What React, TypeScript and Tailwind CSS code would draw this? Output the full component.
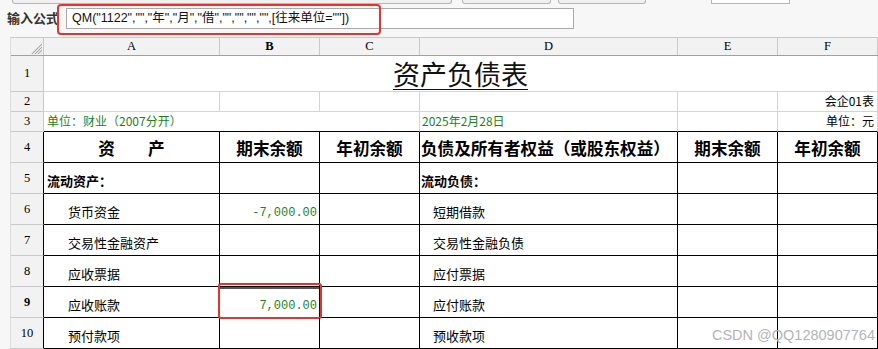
import React from 'react';

const cjk = "font-['Noto_Sans_CJK_SC',sans-serif]";
const serif = "font-['Liberation_Serif','Noto_Sans_CJK_SC',serif]";
const mono = "font-['Liberation_Mono',monospace]";
const green = 'text-[#1f7f1f]';

const rows = [
  { n: 5, left: '流动资产：', right: '流动负债：', bold: true },
  { n: 6, left: '货币资金', right: '短期借款', b: '-7,000.00' },
  { n: 7, left: '交易性金融资产', right: '交易性金融负债' },
  { n: 8, left: '应收票据', right: '应付票据' },
  { n: 9, left: '应收账款', right: '应付账款', b: '7,000.00', selected: true },
  { n: 10, left: '预付款项', right: '预收款项' },
];

function RowHead({ n, dark, bold }: { n: number; dark?: boolean; bold?: boolean }) {
  return (
    <div
      className={`w-[33px] shrink-0 flex items-center justify-center bg-[#f2f2f2] border-b border-[#c9c9c9] border-r text-[12.5px] text-black ${serif} ${
        dark ? 'border-r-black' : 'border-r-[#c9c9c9]'
      } ${bold ? 'font-bold' : 'font-normal'}`}
    >
      {n}
    </div>
  );
}

function Corner() {
  return (
    <div className="w-[33px] shrink-0 relative bg-[#f2f2f2] border-r border-[#c9c9c9]">
      <svg className="absolute right-[1px] bottom-[1px]" width="12" height="12" viewBox="0 0 12 12">
        <polygon points="12,0 12,12 0,12" fill="#e4e4e4" />
        <line x1="12" y1="2" x2="2" y2="12" stroke="#a8a8a8" strokeWidth="1" />
        <line x1="12" y1="5" x2="5" y2="12" stroke="#a8a8a8" strokeWidth="1" />
        <line x1="12" y1="8" x2="8" y2="12" stroke="#a8a8a8" strokeWidth="1" />
      </svg>
    </div>
  );
}

export default function App() {
  return (
    <div className={`w-[878px] h-[349px] overflow-hidden bg-[#f7f7f7] relative ${cjk}`}>
      {/* toolbar remnants */}
      <div className="flex h-[4px]">
        <div className="ml-[12px] w-[440px] border-x border-b border-[#b5b5b5] rounded-b-[3px] bg-[#f0f0f0]" />
        <div className="ml-[10px] w-[89px] border-x border-b border-[#b5b5b5] rounded-b-[3px] bg-[#f0f0f0]" />
        <div className="ml-[7px] w-[88px] border-x border-b border-[#b5b5b5] rounded-b-[3px] bg-[#f0f0f0]" />
        <div className="ml-[65px] w-[79px] border-x border-b border-[#b5b5b5] bg-white" />
      </div>

      {/* formula bar */}
      <div className="flex items-center h-[33px] pb-[5px]">
        <span className="ml-[7px] w-[59px] text-[13px] font-bold text-[#333]">输入公式</span>
        <div className="w-[508px] h-[21px] bg-white border border-[#a9a9a9] flex items-center pl-[5px] text-[12.5px] text-[#111] font-['Liberation_Sans','Noto_Sans_CJK_SC',sans-serif]">
          QM("1122","","年","月","借","","","","",[往来单位=""])
        </div>
      </div>
      <div className="absolute left-[57px] top-[4px] w-[324px] h-[31px] border-2 border-[#e8322c] rounded-[4px]" />

      <div className="flex">
        <div className="w-[11px] shrink-0 bg-[#f7f7f7] border-r border-[#dcdcdc]" />
        <div className="flex flex-col bg-white">
          {/* column headers */}
          <div className={`flex h-[19px] border-t border-[#c9c9c9] border-b border-b-[#a0a0a0] bg-[#f2f2f2] text-[12.5px] ${serif}`}>
            <Corner />
            <div className="w-[176px] flex items-center justify-center border-r border-[#c9c9c9]">A</div>
            <div className="w-[100px] flex items-center justify-center border-r border-[#c9c9c9] font-bold">B</div>
            <div className="w-[100px] flex items-center justify-center border-r border-[#c9c9c9]">C</div>
            <div className="w-[258px] flex items-center justify-center border-r border-[#c9c9c9]">D</div>
            <div className="w-[100px] flex items-center justify-center border-r border-[#c9c9c9]">E</div>
            <div className="w-[100px] flex items-center justify-center border-r border-[#c9c9c9]">F</div>
          </div>

          {/* row 1 title */}
          <div className="flex h-[36px]">
            <RowHead n={1} />
            <div className="w-[834px] flex items-center justify-center border-r border-b border-[#d4d4d4]">
              <span className="text-[27px] leading-none underline underline-offset-[4px] decoration-1 text-[#111] font-['Noto_Sans_CJK_SC',serif]">
                资产负债表
              </span>
            </div>
          </div>

          {/* row 2 */}
          <div className="flex h-[20px] text-[12px]">
            <RowHead n={2} />
            <div className="w-[176px] border-r border-b border-[#d4d4d4]" />
            <div className="w-[100px] border-r border-b border-[#d4d4d4]" />
            <div className="w-[100px] border-r border-b border-[#d4d4d4]" />
            <div className="w-[258px] border-r border-b border-[#d4d4d4]" />
            <div className="w-[100px] border-r border-b border-[#d4d4d4]" />
            <div className="w-[100px] border-r border-b border-[#d4d4d4] flex items-end justify-end pr-[3px] pb-[1px] text-black">
              会企01表
            </div>
          </div>

          {/* row 3 */}
          <div className="flex h-[20px] text-[12px]">
            <RowHead n={3} />
            <div className={`w-[376px] border-r border-[#d4d4d4] border-b border-b-black flex items-end pl-[3px] pb-[1px] ${green}`}>
              单位：财业（2007分开）
            </div>
            <div className={`w-[258px] border-r border-[#d4d4d4] border-b border-b-black flex items-end pl-[2px] pb-[1px] ${green}`}>
              2025年2月28日
            </div>
            <div className="w-[100px] border-r border-[#d4d4d4] border-b border-b-black" />
            <div className="w-[100px] border-r border-[#d4d4d4] border-b border-b-black flex items-end justify-end pr-[3px] pb-[1px] text-black">
              单位：元
            </div>
          </div>

          {/* row 4 header */}
          <div className="flex h-[31px] text-[16.6px] text-black">
            <RowHead n={4} dark />
            <div className="w-[176px] border-r border-b border-black flex items-center justify-center pt-[2px] font-bold">资　　产</div>
            <div className="w-[100px] border-r border-b border-black flex items-center justify-center pt-[2px] font-bold">期末余额</div>
            <div className="w-[100px] border-r border-b border-black flex items-center justify-center pt-[2px] font-bold">年初余额</div>
            <div className="w-[258px] border-r border-b border-black flex items-center pl-[1px] pt-[2px] whitespace-nowrap font-bold">
              负债及所有者权益（或股东权益）
            </div>
            <div className="w-[100px] border-r border-b border-black flex items-center justify-center pt-[2px] font-bold">期末余额</div>
            <div className="w-[100px] border-r border-b border-black flex items-center justify-center pt-[2px] font-bold">年初余额</div>
          </div>

          {rows.map((r) => (
            <div key={r.n} className="flex h-[31px] text-[13px] text-black">
              <RowHead n={r.n} dark bold={r.selected} />
              <div
                className={`w-[176px] border-r border-b border-black flex items-end pb-[3px] ${
                  r.bold ? 'pl-[3px] font-bold' : 'pl-[24px]'
                }`}
              >
                {r.left}
              </div>
              <div className="w-[100px] border-r border-b border-black relative flex items-end justify-end pr-[2px] pb-[2px]">
                {r.selected && (
                  <>
                    <div className="absolute inset-x-0 top-0 h-[2px] bg-[#555]" />
                    <div className="absolute -left-[2px] -top-[4px] w-[104px] h-[36px] border-2 border-[#e8322c] rounded-[3px]" />
                  </>
                )}
                {r.b && <span className={`${mono} text-[12px] ${green}`}>{r.b}</span>}
              </div>
              <div className="w-[100px] border-r border-b border-black" />
              <div
                className={`w-[258px] border-r border-b border-black flex items-end pb-[3px] ${
                  r.bold ? 'pl-[1px] font-bold' : 'pl-[13px]'
                }`}
              >
                {r.right}
              </div>
              <div className="w-[100px] border-r border-b border-black" />
              <div className="w-[100px] border-r border-b border-black" />
            </div>
          ))}
        </div>
      </div>

      <div className="absolute right-[3px] bottom-[7px] text-[14.5px] leading-none text-[#b4b4b4] font-['Liberation_Sans',sans-serif]">
        CSDN @QQ1280907764
      </div>
    </div>
  );
}
